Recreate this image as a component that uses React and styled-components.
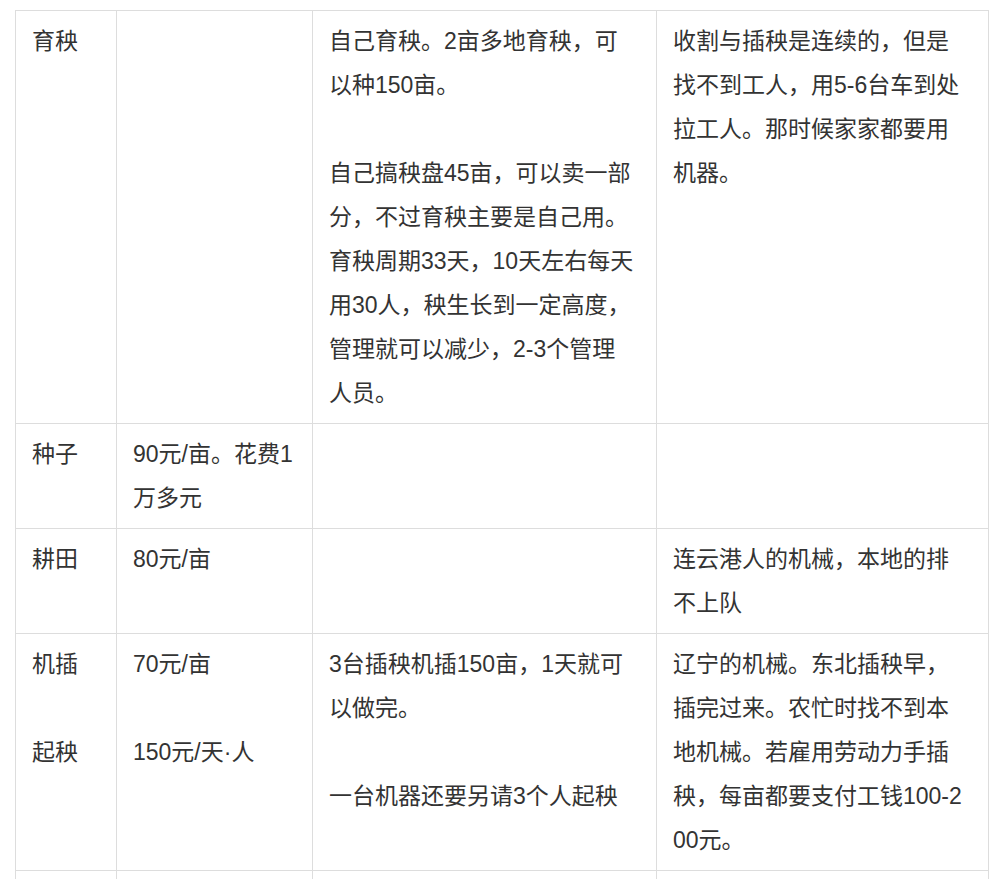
import styled, { createGlobalStyle } from "styled-components";

const GlobalStyle = createGlobalStyle`
  html, body {
    margin: 0;
    padding: 0;
    background: #fff;
  }
  body {
    font-family: "Liberation Sans", "Noto Sans CJK SC", sans-serif;
    color: #333;
  }
`;

const Page = styled.div`
  padding: 10px 0 0 15px;
  overflow: hidden;
  height: 879px;
  box-sizing: border-box;
`;

const Table = styled.table`
  border-collapse: collapse;
  table-layout: fixed;
  width: 973px;
  font-size: 23px;
  line-height: 44px;
`;

const Col = styled.col`
  width: ${(p) => p.$w}px;
`;

const Cell = styled.td`
  border: 1px solid #dddddd;
  padding: 8px 16px;
  vertical-align: top;
  white-space: nowrap;
  height: ${(p) => (p.$h ? `${p.$h}px` : "auto")};
`;

const P = styled.p`
  margin: 0;
  & + & {
    margin-top: 44px;
  }
`;

const Lines = ({ lines }) => (
  <P>
    {lines.map((l, i) => (
      <span key={i}>
        {l}
        {i < lines.length - 1 && <br />}
      </span>
    ))}
  </P>
);

const rows = [
  [
    [["育秧"]],
    [],
    [
      ["自己育秧。2亩多地育秧，可", "以种150亩。"],
      [
        "自己搞秧盘45亩，可以卖一部",
        "分，不过育秧主要是自己用。",
        "育秧周期33天，10天左右每天",
        "用30人，秧生长到一定高度，",
        "管理就可以减少，2-3个管理",
        "人员。",
      ],
    ],
    [["收割与插秧是连续的，但是", "找不到工人，用5-6台车到处", "拉工人。那时候家家都要用", "机器。"]],
  ],
  [[["种子"]], [["90元/亩。花费1", "万多元"]], [], []],
  [[["耕田"]], [["80元/亩"]], [], [["连云港人的机械，本地的排", "不上队"]]],
  [
    [["机插"], ["起秧"]],
    [["70元/亩"], ["150元/天·人"]],
    [["3台插秧机插150亩，1天就可", "以做完。"], ["一台机器还要另请3个人起秧"]],
    [["辽宁的机械。东北插秧早，", "插完过来。农忙时找不到本", "地机械。若雇用劳动力手插", "秧，每亩都要支付工钱100-2", "00元。"]],
  ],
];

export default function App() {
  return (
    <>
      <GlobalStyle />
      <Page>
        <Table>
          <colgroup>
            <Col $w={101} />
            <Col $w={196} />
            <Col $w={344} />
            <Col $w={332} />
          </colgroup>
          <tbody>
            {rows.map((row, r) => (
              <tr key={r}>
                {row.map((paras, c) => (
                  <Cell key={c}>
                    {paras.map((lines, k) => (
                      <Lines key={k} lines={lines} />
                    ))}
                  </Cell>
                ))}
              </tr>
            ))}
            <tr>
              <Cell $h={80} />
              <Cell />
              <Cell />
              <Cell />
            </tr>
          </tbody>
        </Table>
      </Page>
    </>
  );
}
